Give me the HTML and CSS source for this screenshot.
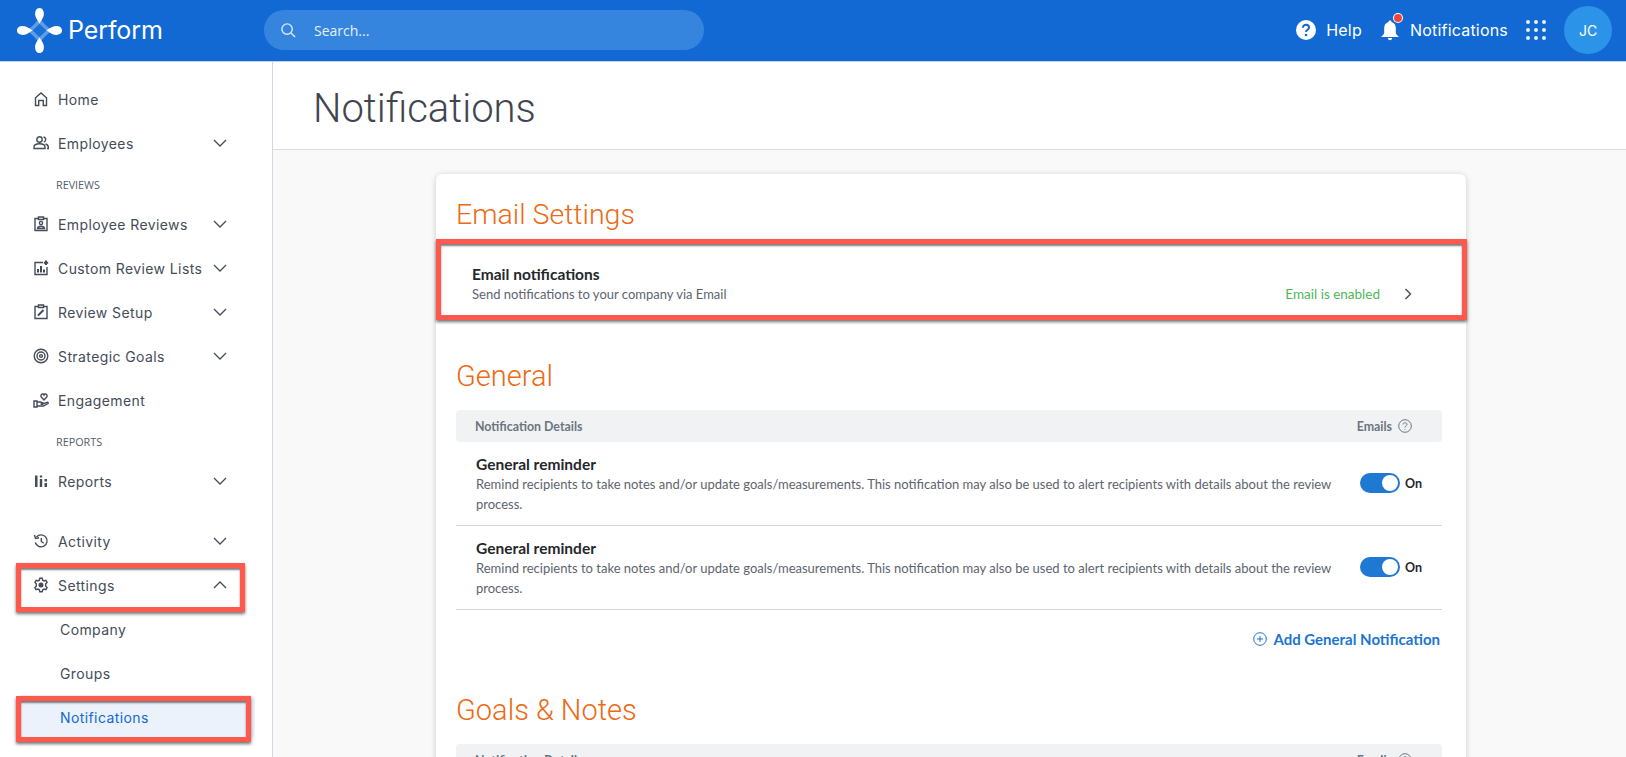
FILE: index.html
```html
<!DOCTYPE html>
<html lang="en">
<head>
<meta charset="utf-8">
<title>Notifications</title>
<link rel="stylesheet" href="styles.css">
</head>
<body>
<header class="topbar">
  <div class="brand">
    <svg class="logo" viewBox="0 0 46 46" aria-hidden="true">
      <path class="logo-star" d="M23 9 C26 15 31 20 37 23 C31 26 26 31 23 37 C20 31 15 26 9 23 C15 20 20 15 23 9Z"/>
      <path class="logo-core" d="M23 16 L30 23 L23 30 L16 23Z"/>
      <path class="logo-petal" d="M23 0 C26 0 27.500 3 27.500 6 C27.500 10 24.500 13 23 16 C21.500 13 18.500 10 18.500 6 C18.500 3 20 0 23 0Z"/>
      <path class="logo-petal" d="M23 46 C26 46 27.500 43 27.500 40 C27.500 36 24.500 33 23 30 C21.500 33 18.500 36 18.500 40 C18.500 43 20 46 23 46Z"/>
      <path class="logo-petal" d="M0 23 C0 20 3 18.500 6 18.500 C10 18.500 13 21.500 16 23 C13 24.500 10 27.500 6 27.500 C3 27.500 0 26 0 23Z"/>
      <path class="logo-petal" d="M46 23 C46 20 43 18.500 40 18.500 C36 18.500 33 21.500 30 23 C33 24.500 36 27.500 40 27.500 C43 27.500 46 26 46 23Z"/>
    </svg>
    <span class="brand-name">Perform</span>
  </div>
  <div class="search">
    <svg class="search-icon" viewBox="0 0 18 18" aria-hidden="true"><circle cx="7.500" cy="7.500" r="5.500"/><path d="M11.600 11.600 L16 16"/></svg>
    <span>Search...</span>
  </div>
  <nav class="top-actions">
    <a class="top-link">
      <svg class="help-icon" viewBox="0 0 20 20" aria-hidden="true"><circle cx="10" cy="10" r="10" fill="#fff"/><path d="M7 7.700 C7 5.900 8.300 4.800 10 4.800 C11.800 4.800 13 5.900 13 7.400 C13 9.800 10 9.700 10 12" fill="none" stroke="#1269d3" stroke-width="2"/><circle cx="10" cy="15" r="1.300" fill="#1269d3"/></svg>
      Help
    </a>
    <a class="top-link bell-link">
      <span class="bell-wrap">
        <svg class="bell-icon" viewBox="0 0 18 22" aria-hidden="true"><path fill="#fff" d="M9 1.500 C10 1.500 10.500 2.200 10.500 3 C13.500 3.800 14.800 6.300 14.800 9 L14.800 13.500 C14.800 15 16 16 17.500 17.500 L17.500 18 L0.500 18 L0.500 17.500 C2 16 3.200 15 3.200 13.500 L3.200 9 C3.200 6.300 4.500 3.800 7.500 3 C7.500 2.200 8 1.500 9 1.500Z M6.800 19 L11.200 19 C11 20.500 10 21.200 9 21.200 C8 21.200 7 20.500 6.800 19Z"/></svg>
        <span class="bell-dot"></span>
      </span>
      Notifications
    </a>
    <span class="apps" aria-hidden="true"><i></i><i></i><i></i><i></i><i></i><i></i><i></i><i></i><i></i></span>
    <span class="avatar">JC</span>
  </nav>
</header>

<div class="shell">
  <aside class="sidebar">
    <ul class="nav">
      <li class="nav-item">
        <svg class="nav-icon" viewBox="0 0 16 16" aria-hidden="true"><path d="M2.500 14.500 V6.800 L8 2 L13.500 6.800 V14.500 H10.300 V9.500 H5.700 V14.500Z"/></svg>
        <span class="nav-text">Home</span>
      </li>
      <li class="nav-item">
        <svg class="nav-icon" viewBox="0 0 16 16" aria-hidden="true"><circle cx="6.500" cy="4.500" r="2.700"/><path d="M1 13.500 V12 C1 9.800 3.500 8.800 6.500 8.800 C9.500 8.800 12 9.800 12 12 V13.500Z"/><path d="M10.500 2 C12.200 2.300 12.800 3.500 12.700 4.700 C12.600 5.800 11.800 6.700 10.800 7"/><path d="M12.500 9 C14.200 9.500 15.300 10.500 15.300 12 V13.500 H14"/></svg>
        <span class="nav-text">Employees</span>
        <svg class="chev" viewBox="0 0 14 8" aria-hidden="true"><path d="M1 1 L7 7 L13 1"/></svg>
      </li>
      <li class="nav-label">REVIEWS</li>
      <li class="nav-item">
        <svg class="nav-icon" viewBox="0 0 16 16" aria-hidden="true"><path d="M5.500 2.500 H2 V14.500 H14 V2.500 H10.500"/><path d="M5.500 1 H10.500 V3.500 H5.500Z"/><circle cx="8" cy="7" r="1.600"/><path d="M4.500 12.500 C4.800 10.800 6.300 10.300 8 10.300 C9.700 10.300 11.200 10.800 11.500 12.500Z"/></svg>
        <span class="nav-text">Employee Reviews</span>
        <svg class="chev" viewBox="0 0 14 8" aria-hidden="true"><path d="M1 1 L7 7 L13 1"/></svg>
      </li>
      <li class="nav-item">
        <svg class="nav-icon" viewBox="0 0 16 16" aria-hidden="true"><path d="M10 2.500 H2 V14.500 H14 V7"/><path class="thick" d="M5 12.500 V9 M8 12.500 V6 M11 12.500 V9.500 M13 0.500 V5 M10.800 2.800 H15.200"/></svg>
        <span class="nav-text">Custom Review Lists</span>
        <svg class="chev" viewBox="0 0 14 8" aria-hidden="true"><path d="M1 1 L7 7 L13 1"/></svg>
      </li>
      <li class="nav-item">
        <svg class="nav-icon" viewBox="0 0 16 16" aria-hidden="true"><path d="M5.500 2.500 H2 V14.500 H14 V2.500 H10.500"/><path d="M5.500 1 H10.500 V3.500 H5.500Z"/><path class="thick" d="M5 11.500 L10.500 6"/></svg>
        <span class="nav-text">Review Setup</span>
        <svg class="chev" viewBox="0 0 14 8" aria-hidden="true"><path d="M1 1 L7 7 L13 1"/></svg>
      </li>
      <li class="nav-item">
        <svg class="nav-icon" viewBox="0 0 16 16" aria-hidden="true"><circle cx="8" cy="8" r="6.800"/><circle cx="8" cy="8" r="4"/><circle cx="8" cy="8" r="1.400"/></svg>
        <span class="nav-text">Strategic Goals</span>
        <svg class="chev" viewBox="0 0 14 8" aria-hidden="true"><path d="M1 1 L7 7 L13 1"/></svg>
      </li>
      <li class="nav-item">
        <svg class="nav-icon" viewBox="0 0 16 16" aria-hidden="true"><path d="M1 9 H4 V15 H1Z"/><path d="M4 10 H7.500 L10 11 C10.800 11.500 10.200 12.500 9.300 12.300 L7.500 12 M4 14 H10.500 L15 11.500 C15.500 10.800 14.800 10 14 10.300 L11 11.500"/><path d="M11 8 L8.500 5.300 C7.300 4 8 2 9.500 2 C10.300 2 10.800 2.500 11 3 C11.200 2.500 11.700 2 12.500 2 C14 2 14.700 4 13.500 5.300Z"/></svg>
        <span class="nav-text">Engagement</span>
      </li>
      <li class="nav-label">REPORTS</li>
      <li class="nav-item nav-item-last">
        <svg class="nav-icon nav-icon-solid" viewBox="0 0 16 16" aria-hidden="true"><path d="M2 2.500 H4.500 V14 H2Z M6.800 6 H9.200 V14 H6.800Z M11.500 6 H14 V8.500 H11.500Z M11.500 10 H14 V14 H11.500Z M6.800 2.500 H9.200 V4.500 H6.800Z"/></svg>
        <span class="nav-text">Reports</span>
        <svg class="chev" viewBox="0 0 14 8" aria-hidden="true"><path d="M1 1 L7 7 L13 1"/></svg>
      </li>
      <li class="nav-item">
        <svg class="nav-icon" viewBox="0 0 16 16" aria-hidden="true"><path d="M2.300 9.500 A6 6 0 1 0 3.500 4"/><path d="M1.500 2 L2.500 5.500 L6 4.700"/><path d="M8.300 5 V8.500 L10.800 10.300"/></svg>
        <span class="nav-text">Activity</span>
        <svg class="chev" viewBox="0 0 14 8" aria-hidden="true"><path d="M1 1 L7 7 L13 1"/></svg>
      </li>
      <li class="nav-item">
        <svg class="nav-icon" viewBox="0 0 16 16" aria-hidden="true"><path d="M6.800 1.300 H9.200 L9.700 3.200 L11 3.900 L12.900 3.300 L14.100 5.400 L12.700 6.800 V9.200 L14.100 10.600 L12.900 12.700 L11 12.100 L9.700 12.800 L9.200 14.700 H6.800 L6.300 12.800 L5 12.100 L3.100 12.700 L1.900 10.600 L3.300 9.200 V6.800 L1.900 5.400 L3.100 3.300 L5 3.900 L6.300 3.200Z"/><circle cx="8" cy="8" r="1.800" class="fill-dark"/></svg>
        <span class="nav-text">Settings</span>
        <svg class="chev" viewBox="0 0 14 8" aria-hidden="true"><path d="M1 7 L7 1 L13 7"/></svg>
      </li>
      <li class="nav-sub">Company</li>
      <li class="nav-sub">Groups</li>
      <li class="nav-sub nav-sub-active">Notifications</li>
    </ul>
  </aside>

  <main class="main">
    <div class="page-head"><h1>Notifications</h1></div>
    <div class="page-body">
      <section class="card">
        <h2 class="section-title section-first">Email Settings</h2>
        <div class="email-row">
          <div class="email-copy">
            <div class="row-title">Email notifications</div>
            <div class="row-desc">Send notifications to your company via Email</div>
          </div>
          <div class="email-status">
            <span>Email is enabled</span>
            <svg class="chev-right" viewBox="0 0 8 12" aria-hidden="true"><path d="M1.500 1 L6.500 6 L1.500 11"/></svg>
          </div>
        </div>

        <h2 class="section-title section-general">General</h2>
        <div class="table-head">
          <span>Notification Details</span>
          <span class="emails-col">Emails
            <svg class="q-icon" viewBox="0 0 14 14" aria-hidden="true"><circle cx="7" cy="7" r="6.300"/><path d="M5 5.500 C5 4.300 6 3.700 7 3.700 C8.100 3.700 9 4.400 9 5.400 C9 6.800 7 6.800 7 8.500"/><path d="M7 10 V10.800"/></svg>
          </span>
        </div>
        <div class="note-row">
          <div class="note-copy">
            <div class="row-title">General reminder</div>
            <div class="row-desc">Remind recipients to take notes and/or update goals/measurements. This notification may also be used to alert recipients with details about the review process.</div>
          </div>
          <div class="toggle-wrap"><span class="toggle"><span class="knob"></span></span><b>On</b></div>
        </div>
        <div class="note-row">
          <div class="note-copy">
            <div class="row-title">General reminder</div>
            <div class="row-desc">Remind recipients to take notes and/or update goals/measurements. This notification may also be used to alert recipients with details about the review process.</div>
          </div>
          <div class="toggle-wrap"><span class="toggle"><span class="knob"></span></span><b>On</b></div>
        </div>
        <div class="add-row">
          <a class="add-link">
            <svg class="plus-icon" viewBox="0 0 14 14" aria-hidden="true"><circle cx="7" cy="7" r="6.300"/><path d="M7 4 V10 M4 7 H10"/></svg>
            Add General Notification
          </a>
        </div>

        <h2 class="section-title">Goals &amp; Notes</h2>
        <div class="table-head">
          <span>Notification Details</span>
          <span class="emails-col">Emails
            <svg class="q-icon" viewBox="0 0 14 14" aria-hidden="true"><circle cx="7" cy="7" r="6.300"/><path d="M5 5.500 C5 4.300 6 3.700 7 3.700 C8.100 3.700 9 4.400 9 5.400 C9 6.800 7 6.800 7 8.500"/><path d="M7 10 V10.800"/></svg>
          </span>
        </div>
      </section>
    </div>
  </main>
</div>

<div class="callout callout-settings"></div>
<div class="callout callout-notifications"></div>
<div class="callout callout-email"></div>
</body>
</html>
```

FILE: styles.css
```css
* { box-sizing: border-box; }
html, body { height: 100%; }
body {
  margin: 0;
  position: relative;
  overflow: hidden;
  background: #fff;
  color: #3f4650;
  font-family: "Inter", "Liberation Sans", sans-serif;
  display: flex;
  flex-direction: column;
}
ul { list-style: none; margin: 0; padding: 0; }
h1, h2 { margin: 0; font-weight: 300; }

/* Top bar */
.topbar {
  flex: none;
  height: 62px;
  padding-bottom: 1px;
  background: #1269d3;
  border-bottom: 1px solid #c9d3e0;
  display: flex;
  align-items: center;
  color: #fff;
}
.brand { width: 264px; display: flex; align-items: center; padding-left: 17px; }
.logo { width: 45px; height: 45px; flex: none; }
.logo-petal { fill: #fff; }
.logo-star { fill: #5f9de6; }
.logo-core { fill: #1a6fd8; }
.brand-name {
  margin-left: 6px;
  font-family: "Inter", sans-serif;
  font-size: 25px;
  font-weight: 400;
  letter-spacing: -0.1px;
}
.search {
  width: 440px;
  height: 40px;
  border-radius: 20px;
  background: #3585de;
  display: flex;
  align-items: center;
  padding-left: 16px;
  font-family: "Open Sans", sans-serif;
  font-size: 14px;
  color: #e6effa;
}
.search-icon { width: 17px; height: 17px; margin-right: 17px; fill: none; stroke: #dbe8f8; stroke-width: 1.500; }
.top-actions { margin-left: auto; display: flex; align-items: center; padding-right: 14px; }
.top-link { display: flex; align-items: center; font-size: 16px; letter-spacing: 0.2px; }
.help-icon { width: 20px; height: 20px; margin-right: 10px; }
.bell-link { margin-left: 19px; }
.bell-wrap { position: relative; width: 18px; height: 22px; margin-right: 11px; display: block; }
.bell-icon { width: 18px; height: 22px; display: block; }
.bell-dot {
  position: absolute;
  top: -5px;
  right: -3px;
  width: 8px;
  height: 8px;
  border-radius: 50%;
  background: #ef4444;
  box-shadow: 0 0 0 1px #fff;
}
.apps {
  margin-left: 18px;
  width: 20px;
  height: 20px;
  display: grid;
  grid-template-columns: repeat(3, 4px);
  grid-template-rows: repeat(3, 4px);
  justify-content: space-between;
  align-content: space-between;
}
.apps i { border-radius: 50%; background: #e8f0fa; }
.avatar {
  margin-left: 18px;
  width: 48px;
  height: 48px;
  border-radius: 50%;
  background: #2b94e8;
  display: flex;
  align-items: center;
  justify-content: center;
  font-size: 14px;
}

/* Shell */
.shell { flex: 1; min-height: 0; display: flex; }
.sidebar {
  flex: none;
  width: 273px;
  border-right: 1px solid #d3d9e2;
  padding: 15px 41px 0 33px;
  background: #fff;
}
.nav-item { height: 44px; display: flex; align-items: center; font-size: 14px; letter-spacing: 0.4px; color: #444c58; }
.nav-item-last { margin-bottom: 16px; }
.nav-icon { width: 16px; height: 16px; flex: none; fill: none; stroke: #444c58; stroke-width: 1.400; margin-right: 9px; }
.nav-icon-solid { fill: #444c58; stroke: none; }
.fill-dark { fill: #444c58; }
.thick { stroke-width: 2; }
.nav-text { flex: 1; white-space: nowrap; }
.chev { width: 14px; height: 8px; flex: none; fill: none; stroke: #444c58; stroke-width: 1.300; margin-right: 4px; }
.nav-label {
  height: 37px;
  padding: 2px 0 0 23px;
  display: flex;
  align-items: center;
  font-family: "Open Sans", sans-serif;
  font-size: 10.800px;
  color: #56606c;
}
.nav-sub { height: 44px; display: flex; align-items: center; padding-left: 39px; margin-left: -12px; margin-right: -24px; font-size: 14px; letter-spacing: 0.4px; color: #444c58; }
.nav-sub-active { background: #ebf2fb; color: #1269d3; border-radius: 0 6px 6px 0; }

/* Main */
.main { flex: 1; min-width: 0; display: flex; flex-direction: column; }
.page-head { flex: none; height: 88px; border-bottom: 1px solid #d9dce1; padding: 5px 0 0 40px; display: flex; align-items: center; }
.page-head h1 { font-family: "Roboto", sans-serif; font-weight: 300; font-size: 40px; color: #3f4650; }
.page-body { flex: 1; min-height: 0; background: #f9f9f9; padding: 24px 0 0 163px; overflow: hidden; }
.card {
  width: 1030px;
  min-height: 640px;
  background: #fff;
  border-radius: 6px 6px 0 0;
  box-shadow: 0 1px 6px rgba(0,0,0,.18);
  padding: 0 24px 0 20px;
}
.section-title { font-family: "Roboto", sans-serif; font-weight: 300; font-size: 29px; line-height: 36px; color: #ec6a14; }
.section-first { padding-top: 23px; height: 65px; font-size: 28.500px; }
.section-general { margin-top: 38px; }
.email-row {
  height: 81px;
  margin: 0 -24px 0 -20px;
  padding: 0 54px 0 36px;
  display: flex;
  justify-content: space-between;
}
.email-copy { padding-top: 25px; }
.row-title { font-family: "Lato", sans-serif; font-weight: 700; font-size: 15.500px; line-height: 20px; color: #24272b; }
.row-desc { font-family: "Lato", sans-serif; font-size: 13px; line-height: 20px; color: #5d646e; }
.email-status { display: flex; align-items: center; padding-top: 40px; height: 70px; font-family: "Lato", sans-serif; font-size: 13.500px; color: #4fb75a; }
.chev-right { width: 8px; height: 12px; margin-left: 24px; fill: none; stroke: #4b5360; stroke-width: 1.500; }
.table-head {
  height: 32px;
  margin-top: 16px;
  padding: 0 30px 0 19px;
  background: #f1f2f4;
  border-radius: 4px;
  display: flex;
  align-items: center;
  justify-content: space-between;
  font-family: "Lato", sans-serif;
  font-weight: 700;
  font-size: 12.400px;
  color: #6b7580;
}
.emails-col { display: flex; align-items: center; }
.q-icon { width: 14px; height: 14px; margin-left: 6px; fill: none; stroke: #6b7580; stroke-width: 1; }
.note-row {
  height: 84px;
  padding: 12px 20px 0 20px;
  border-bottom: 1px solid #d2d4d8;
  display: flex;
  justify-content: space-between;
}
.note-copy { width: 860px; }
.toggle-wrap { display: flex; align-items: center; height: 20px; margin-top: 19px; font-family: "Lato", sans-serif; font-size: 12.500px; color: #24272b; }
.toggle-wrap b { margin-left: 5px; font-weight: 700; }
.toggle { width: 40px; height: 20px; border-radius: 10px; background: #1f78d1; position: relative; display: block; }
.knob { position: absolute; top: 2px; right: 2px; width: 16px; height: 16px; border-radius: 50%; background: #fff; }
.add-row { display: flex; justify-content: flex-end; height: 82px; padding: 18px 2px 0 0; }
.add-link { display: flex; align-items: center; height: 22px; font-family: "Lato", sans-serif; font-weight: 700; font-size: 15px; color: #1b75cf; }
.plus-icon { width: 14px; height: 14px; margin-right: 6px; fill: none; stroke: #1b75cf; stroke-width: 1; }

/* Annotation boxes over the screenshot */
.callout {
  position: absolute;
  border: 5px solid #ff584c;
  box-shadow: 0 2px 3px rgba(0,0,0,.55), inset 0 2px 2px rgba(0,0,0,.5);
  pointer-events: none;
}
.callout-settings { left: 16px; top: 563px; width: 229px; height: 49px; }
.callout-notifications { left: 16px; top: 696px; width: 235px; height: 46px; }
.callout-email { left: 436px; top: 239px; width: 1031px; height: 81px; }
```
